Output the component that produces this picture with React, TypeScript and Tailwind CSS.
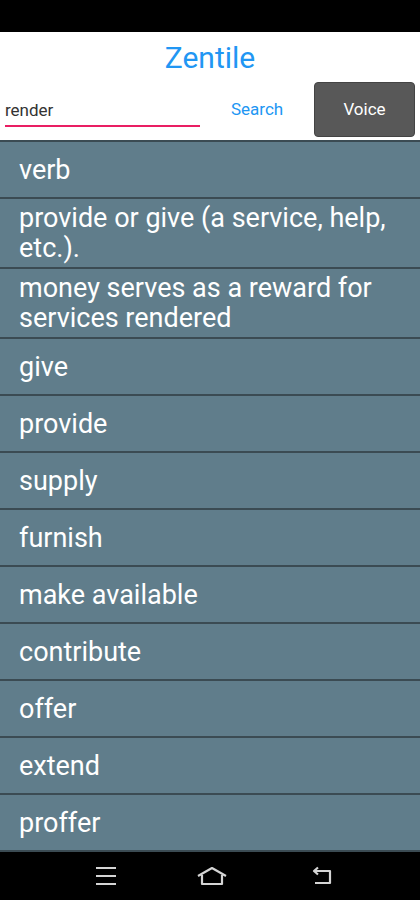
const words = [
  'verb',
  'provide or give (a service, help, etc.).',
  'money serves as a reward for services rendered',
  'give',
  'provide',
  'supply',
  'furnish',
  'make available',
  'contribute',
  'offer',
  'extend',
  'proffer',
];

const Row = ({ text }: { text: string }) => (
  <div className="flex min-h-[57px] items-center border-b-2 border-[#3b4b53] bg-[#607d8b] px-[19px] py-[4px] text-[27px] leading-[30px] text-white">
    {text}
  </div>
);

const NavBar = () => (
  <div className="flex h-[48px] items-center bg-black pl-[95px]">
    <svg width="22" height="20" viewBox="0 0 22 20">
      <path d="M1 2H21M1 10H21M1 18H21" stroke="#d4d4d4" strokeWidth="2.2" fill="none" />
    </svg>
    <svg width="32" height="20" viewBox="0 0 32 20" className="ml-[79px]">
      <path d="M2 10L16 2L30 10M6 9V18H26V9" stroke="#d4d4d4" strokeWidth="2.2" fill="none" strokeLinejoin="round" />
    </svg>
    <svg width="22" height="20" viewBox="0 0 22 20" className="ml-[83px]">
      <path d="M3 5H19V17H4M7 1.5L3 5L7 8.5" stroke="#d4d4d4" strokeWidth="2.2" fill="none" strokeLinejoin="round" />
    </svg>
  </div>
);

export default function App() {
  return (
    <div className="flex h-[900px] w-[420px] flex-col bg-white font-['Roboto',sans-serif]">
      <div className="h-[32px] bg-black" />
      <div className="pt-[6px] text-center text-[30px] leading-[40px] text-[#2196f3]">Zentile</div>
      <div className="flex h-[62px] items-center">
        <input
          readOnly
          value="render"
          className="ml-[5px] mt-[4px] h-[32px] w-[195px] border-b-2 border-[#e91e63] text-[17px] text-[#333] outline-none"
        />
        <button className="ml-[31px] mt-[2px] text-[17px] text-[#2196f3]">Search</button>
        <button className="ml-auto mr-[5px] h-[55px] w-[101px] rounded-[4px] border border-[#444] bg-[#585858] pt-[2px] text-[17px] text-white">
          Voice
        </button>
      </div>
      <div className="flex-1 overflow-hidden border-t-2 border-[#3b4b53] bg-[#607d8b]">
        {words.map((w) => (
          <Row key={w} text={w} />
        ))}
      </div>
      <NavBar />
    </div>
  );
}
